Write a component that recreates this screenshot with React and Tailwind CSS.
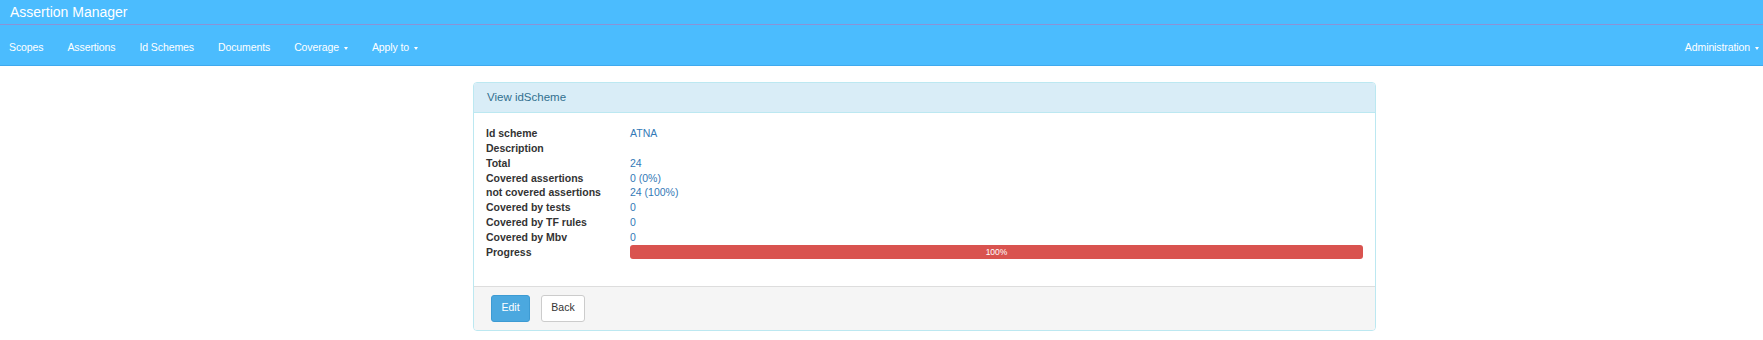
import React from "react";

const rows = [
  ["Id scheme", "ATNA"],
  ["Description", ""],
  ["Total", "24"],
  ["Covered assertions", "0 (0%)"],
  ["not covered assertions", "24 (100%)"],
  ["Covered by tests", "0"],
  ["Covered by TF rules", "0"],
  ["Covered by Mbv", "0"],
];

const navItems = [
  { label: "Scopes" },
  { label: "Assertions" },
  { label: "Id Schemes" },
  { label: "Documents" },
  { label: "Coverage", caret: true },
  { label: "Apply to", caret: true },
];

const Caret = () => (
  <span className="ml-[5px] inline-block h-0 w-0 border-x-[2.5px] border-t-[3px] border-x-transparent border-t-white align-middle" />
);

const App = () => {
  return (
    <div className="min-h-[340px] bg-white font-['Liberation_Sans',Arial,sans-serif] text-[10.5px] text-[#333]">
      <div className="bg-[#4bbcfe] text-white">
        <div className="flex h-[25px] items-center border-b border-[#8a93d6] pl-[10px] text-[14px]">
          Assertion Manager
        </div>
        <div className="flex h-[41px] items-center justify-between border-b border-[#3fa9ee] pl-[9px] pr-[4px] pt-[6px] tracking-[-0.1px]">
          <div className="flex items-center gap-[24px]">
            {navItems.map(item => (
              <span key={item.label} className="flex items-center">
                {item.label}
                {item.caret && <Caret />}
              </span>
            ))}
          </div>
          <span className="flex items-center">
            Administration
            <Caret />
          </span>
        </div>
      </div>

      <div className="ml-[473px] mt-[16px] w-[903px] rounded-[4px] border border-[#bce8f1]">
        <div className="flex h-[30px] items-center rounded-t-[3px] border-b border-[#bce8f1] bg-[#d9edf7] pl-[13px] text-[11.5px] text-[#31708f]">
          View idScheme
        </div>
        <div className="pl-[12px] pr-[12px] pt-[13px] pb-[26px] leading-[14.85px]">
          {rows.map(([label, value]) => (
            <div key={label} className="grid grid-cols-[144px_1fr]">
              <span className="font-bold">{label}</span>
              <span className="text-[#337ab7]">{value}</span>
            </div>
          ))}
          <div className="grid grid-cols-[144px_1fr] items-center">
            <span className="font-bold">Progress</span>
            <div className="flex h-[14px] items-center justify-center rounded-[3px] bg-[#d9534f] text-[8.5px] text-white">
              100%
            </div>
          </div>
        </div>
        <div className="flex gap-[11px] rounded-b-[3px] border-t border-[#dddddd] bg-[#f5f5f5] pl-[17px] pt-[8px] pb-[8px]">
          <button className="h-[27px] w-[39px] rounded-[3px] border border-[#3d9bd3] bg-[#4ba8df] text-[10.5px] text-white">
            Edit
          </button>
          <button className="h-[27px] w-[44px] rounded-[3px] border border-[#cccccc] bg-white text-[10.5px] text-[#333]">
            Back
          </button>
        </div>
      </div>
    </div>
  );
};

export default App;
